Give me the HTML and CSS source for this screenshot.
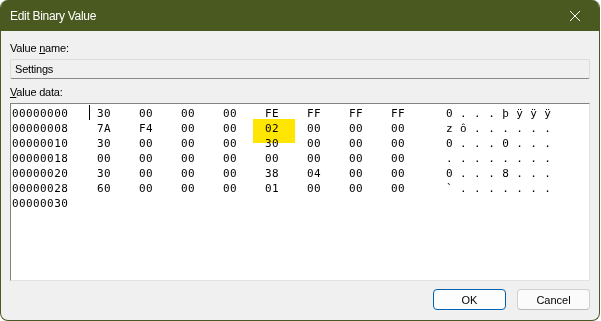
FILE: index.html
```html
<!DOCTYPE html>
<html lang="en">
<head>
    <meta charset="UTF-8">
    <title>Edit Binary Value</title>
    <link rel="stylesheet" href="styles.css">
</head>
<body>

    <div class="window">
        <div class="titlebar">
            <span class="title">Edit Binary Value</span>
            <svg class="close-icon" width="12" height="12" viewBox="0 0 12 12">
                <path d="M1 1 L11 11 M11 1 L1 11" stroke="#ffffff" stroke-width="1" fill="none"/>
            </svg>
        </div>

        <div class="content">
            <label class="field-label">Value <u>n</u>ame:</label>
            <div class="name-box">Settings</div>

            <label class="field-label label-data"><u>V</u>alue data:</label>
            <div class="hex-box">
                <!-- highlight over the changed byte -->
                <div class="marker"></div>
                <div class="caret"></div>

                <div class="hex-row">
                    <span>00000000</span><span>30</span><span>00</span><span>00</span><span>00</span><span>FE</span><span>FF</span><span>FF</span><span>FF</span><span class="ascii">0 . . . þ ÿ ÿ ÿ</span>
                </div>
                <div class="hex-row">
                    <span>00000008</span><span>7A</span><span>F4</span><span>00</span><span>00</span><span>02</span><span>00</span><span>00</span><span>00</span><span class="ascii">z ô . . . . . .</span>
                </div>
                <div class="hex-row">
                    <span>00000010</span><span>30</span><span>00</span><span>00</span><span>00</span><span>30</span><span>00</span><span>00</span><span>00</span><span class="ascii">0 . . . 0 . . .</span>
                </div>
                <div class="hex-row">
                    <span>00000018</span><span>00</span><span>00</span><span>00</span><span>00</span><span>00</span><span>00</span><span>00</span><span>00</span><span class="ascii">. . . . . . . .</span>
                </div>
                <div class="hex-row">
                    <span>00000020</span><span>30</span><span>00</span><span>00</span><span>00</span><span>38</span><span>04</span><span>00</span><span>00</span><span class="ascii">0 . . . 8 . . .</span>
                </div>
                <div class="hex-row">
                    <span>00000028</span><span>60</span><span>00</span><span>00</span><span>00</span><span>01</span><span>00</span><span>00</span><span>00</span><span class="ascii">` . . . . . . .</span>
                </div>
                <div class="hex-row">
                    <span>00000030</span>
                </div>
            </div>

            <div class="buttons">
                <button type="button" class="btn btn-default">OK</button>
                <button type="button" class="btn">Cancel</button>
            </div>
        </div>
    </div>

</body>
</html>
```

FILE: styles.css
```css
body {
    margin: 0;
    padding: 0;
    background-color: #ffffff;
    font-family: 'Liberation Sans', Arial, sans-serif;
}

.window {
    box-sizing: border-box;
    width: 600px;
    height: 321px;
    border: 1px solid #4a5920;
    border-top: none;
    border-radius: 8px;
    background-color: #f0f0f0;
    overflow: hidden;
    display: flex;
    flex-direction: column;
}

.titlebar {
    height: 31px;
    background-color: #4a5920;
    color: #ffffff;
    display: flex;
    align-items: center;
    justify-content: space-between;
    padding: 0 9px 0 9px;
    flex-shrink: 0;
}

.title {
    font-size: 12px;
    letter-spacing: -0.3px;
    padding-top: 1px;
}

.close-icon {
    margin-right: 9px;
    margin-top: 1px;
}

.content {
    padding: 9px 9px 0 9px;
    display: flex;
    flex-direction: column;
    font-size: 11px;
    color: #000000;
}

.field-label {
    line-height: 16px;
    letter-spacing: -0.2px;
}

.field-label u {
    text-underline-offset: 1px;
}

.label-data {
    margin-top: 5px;
}

.name-box {
    box-sizing: border-box;
    height: 20px;
    margin-top: 3px;
    padding: 0 4px;
    line-height: 19px;
    border: 1px solid #dcdcdc;
    border-bottom-color: #8a8a8a;
    border-radius: 2px;
    background-color: #f0f0f0;
    letter-spacing: -0.2px;
}

.hex-box {
    position: relative;
    box-sizing: border-box;
    height: 178px;
    margin-top: 3px;
    padding: 2px 1px;
    background-color: #ffffff;
    border: 1px solid #e3e3e3;
    border-top-color: #838383;
    border-left-color: #838383;
    font-family: 'DejaVu Sans Mono', 'Liberation Mono', monospace;
    font-size: 11px;
    letter-spacing: 0.4px;
}

.hex-row {
    display: grid;
    grid-template-columns: 85px repeat(8, 42px) auto;
    height: 15px;
    line-height: 15px;
}

.ascii {
    margin-left: 13px;
    white-space: pre;
}

.caret {
    position: absolute;
    left: 78px;
    top: 1px;
    width: 1px;
    height: 15px;
    background-color: #000000;
}

.marker {
    position: absolute;
    left: 242px;
    top: 15px;
    width: 42px;
    height: 24px;
    background-color: #ffe600;
    mix-blend-mode: multiply;
    z-index: 1;
}

.buttons {
    display: flex;
    justify-content: flex-end;
    gap: 11px;
    margin-top: 8px;
}

.btn {
    box-sizing: border-box;
    width: 73px;
    height: 21px;
    padding: 0;
    font-family: 'Liberation Sans', Arial, sans-serif;
    font-size: 11px;
    color: #000000;
    background-color: #fbfbfb;
    border: 1px solid #d0d0d0;
    border-bottom-color: #bababa;
    border-radius: 4px;
}

.btn-default {
    background-color: #fdfdfd;
    border: 1px solid #0063b1;
}
```
